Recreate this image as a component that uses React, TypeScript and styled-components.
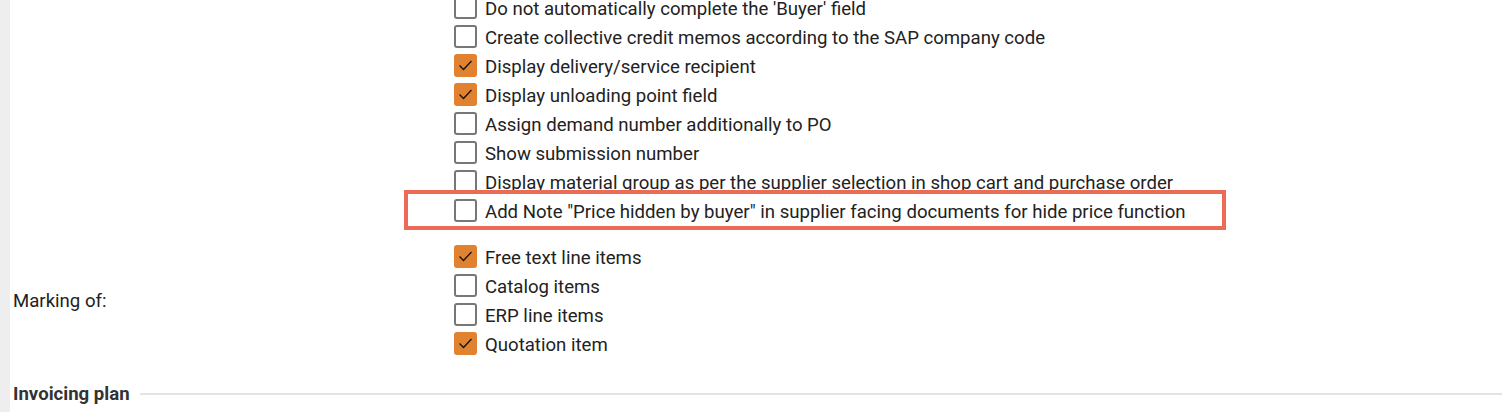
import React from "react";
import styled, { createGlobalStyle } from "styled-components";

const GlobalStyle = createGlobalStyle`
  html, body {
    margin: 0;
    padding: 0;
    background: #ffffff;
  }
  body {
    font-family: Roboto, "Liberation Sans", Arial, sans-serif;
    color: #222222;
    overflow: hidden;
  }
`;

type Option = { label: string; checked: boolean; highlight?: boolean };

const generalOptions: Option[] = [
  { label: "Do not automatically complete the 'Buyer' field", checked: false },
  { label: "Create collective credit memos according to the SAP company code", checked: false },
  { label: "Display delivery/service recipient", checked: true },
  { label: "Display unloading point field", checked: true },
  { label: "Assign demand number additionally to PO", checked: false },
  { label: "Show submission number", checked: false },
  { label: "Display material group as per the supplier selection in shop cart and purchase order", checked: false },
  {
    label: 'Add Note "Price hidden by buyer" in supplier facing documents for hide price function',
    checked: false,
    highlight: true,
  },
];

const markingOptions: Option[] = [
  { label: "Free text line items", checked: true },
  { label: "Catalog items", checked: false },
  { label: "ERP line items", checked: false },
  { label: "Quotation item", checked: true },
];

const Page = styled.div`
  display: flex;
  height: 412px;
`;

const SideStrip = styled.div`
  width: 10px;
  flex-shrink: 0;
  background: #eeeeee;
`;

const Content = styled.div`
  flex: 1;
  padding-left: 3px;
  margin-top: -7px;
`;

const FieldGroup = styled.div<{ $gapTop?: number }>`
  display: grid;
  grid-template-columns: 441px 1fr;
  align-items: center;
  margin-top: ${(p) => p.$gapTop ?? 0}px;
`;

const FieldLabel = styled.div`
  font-size: 18.6px;
  color: #222222;
  padding-top: 2px;
`;

const OptionList = styled.div`
  display: flex;
  flex-direction: column;
`;

const Row = styled.label<{ $highlight?: boolean }>`
  position: relative;
  display: flex;
  align-items: center;
  gap: 8px;
  height: 29px;
  font-size: 18.6px;
  color: #222222;
  white-space: nowrap;

  ${(p) =>
    p.$highlight &&
    `
    &::after {
      content: "";
      position: absolute;
      left: -50px;
      top: -6px;
      width: 822px;
      height: 40px;
      box-sizing: border-box;
      border: 4px solid #ec6b56;
      pointer-events: none;
    }
  `}
`;

const RowText = styled.span`
  padding-top: 2px;
`;

const Box = styled.span<{ $checked: boolean }>`
  box-sizing: border-box;
  width: 23px;
  height: 23px;
  flex-shrink: 0;
  border-radius: 3px;
  border: 2px solid ${(p) => (p.$checked ? "#e0822f" : "#777777")};
  background: ${(p) => (p.$checked ? "#e0822f" : "#ffffff")};
  display: flex;
  align-items: center;
  justify-content: center;
`;

const SectionHeader = styled.div`
  display: flex;
  align-items: center;
  gap: 10px;
  margin-top: 25px;
`;

const SectionTitle = styled.span`
  font-size: 18.6px;
  font-weight: 700;
  color: #333333;
`;

const Rule = styled.div`
  flex: 1;
  height: 2px;
  background: #e4e4e4;
`;

const Checkbox = ({ checked }: { checked: boolean }) => (
  <Box $checked={checked}>
    {checked && (
      <svg width="17" height="17" viewBox="0 0 17 17">
        <polyline
          points="2.5,8.5 6.5,12.5 14.5,4"
          fill="none"
          stroke="#111111"
          strokeWidth="1.3"
        />
      </svg>
    )}
  </Box>
);

const OptionRow = ({ option }: { option: Option }) => (
  <Row $highlight={option.highlight}>
    <Checkbox checked={option.checked} />
    <RowText>{option.label}</RowText>
  </Row>
);

export default function App() {
  return (
    <>
      <GlobalStyle />
      <Page>
        <SideStrip />
        <Content>
          <FieldGroup>
            <FieldLabel />
            <OptionList>
              {generalOptions.map((o) => (
                <OptionRow key={o.label} option={o} />
              ))}
            </OptionList>
          </FieldGroup>
          <FieldGroup $gapTop={17}>
            <FieldLabel>Marking of:</FieldLabel>
            <OptionList>
              {markingOptions.map((o) => (
                <OptionRow key={o.label} option={o} />
              ))}
            </OptionList>
          </FieldGroup>
          <SectionHeader>
            <SectionTitle>Invoicing plan</SectionTitle>
            <Rule />
          </SectionHeader>
        </Content>
      </Page>
    </>
  );
}
